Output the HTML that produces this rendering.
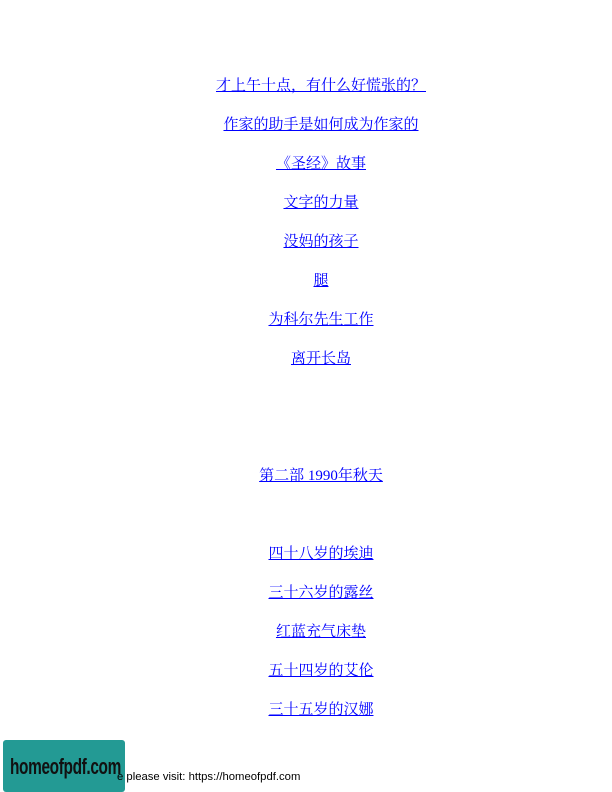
<!DOCTYPE html>
<html><head><meta charset="utf-8"><style>
body{margin:0;width:612px;height:792px;background:#fff;position:relative;overflow:hidden}
a{position:absolute;left:0;width:642px;text-align:center;color:#00f;text-decoration:underline;font:15px/18px "Liberation Serif","Noto Serif CJK SC",serif;white-space:nowrap}
.logo{position:absolute;left:3px;top:740px;width:122px;height:52px;background:#239a94;border-radius:3px;overflow:hidden}
.logo span{position:absolute;left:7px;top:14px;font:bold 22px "Liberation Sans",sans-serif;color:#111;transform:scaleX(0.7);transform-origin:0 0;letter-spacing:-0.5px;white-space:nowrap}
.ft{position:absolute;left:117px;top:771px;font:11.3px "Liberation Sans",sans-serif;color:#000;z-index:2}
</style></head><body>
<a style="top:77px">才上午十点，有什么好慌张的？</a>
<a style="top:116px">作家的助手是如何成为作家的</a>
<a style="top:155px">《圣经》故事</a>
<a style="top:194px">文字的力量</a>
<a style="top:233px">没妈的孩子</a>
<a style="top:272px">腿</a>
<a style="top:311px">为科尔先生工作</a>
<a style="top:350px">离开长岛</a>
<a style="top:467px">第二部 1990年秋天</a>
<a style="top:545px">四十八岁的埃迪</a>
<a style="top:584px">三十六岁的露丝</a>
<a style="top:623px">红蓝充气床垫</a>
<a style="top:662px">五十四岁的艾伦</a>
<a style="top:701px">三十五岁的汉娜</a>
<div class="ft">e please visit: https://homeofpdf.com</div>
<div class="logo"><span>homeofpdf.com</span></div>
</body></html>
